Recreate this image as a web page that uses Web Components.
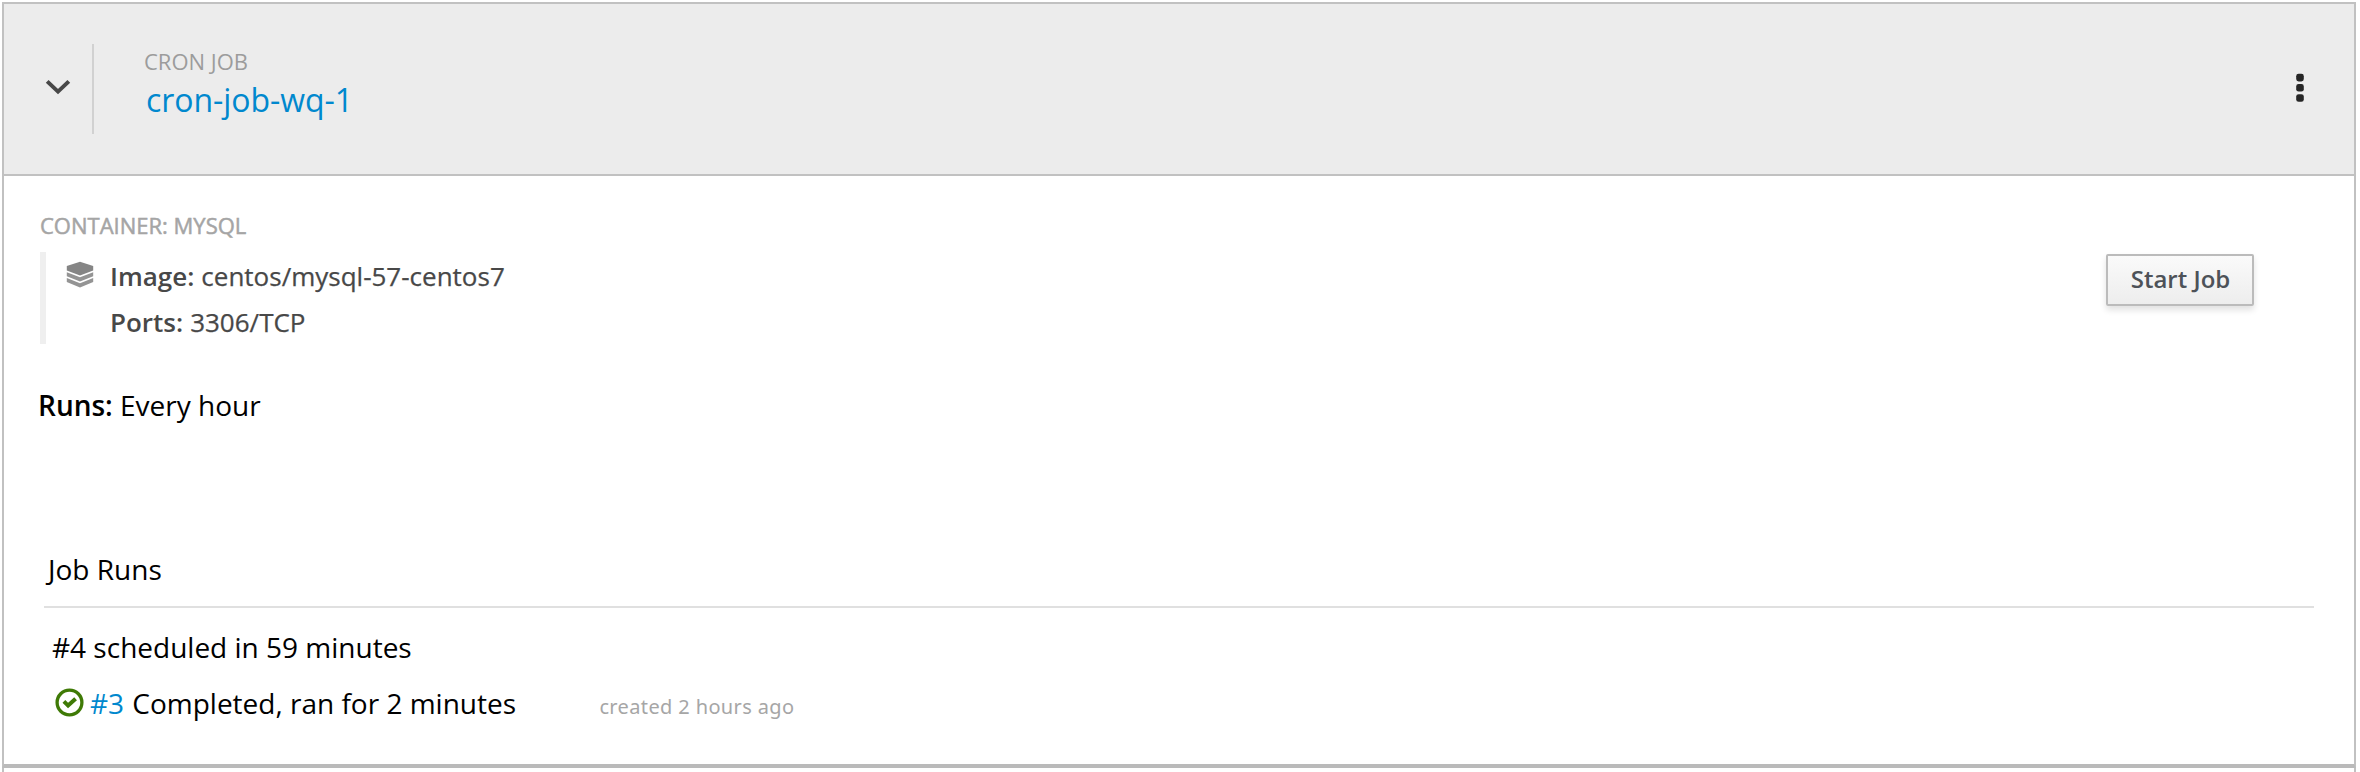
<!DOCTYPE html>
<html lang="en">
<head>
<meta charset="utf-8">
<title>cron-job-wq-1</title>
<style>
html, body { margin: 0; height: 100%; background: #fff; overflow: hidden; }
body { font-family: "Open Sans", "Noto Sans", sans-serif; color: #000; }
</style>
</head>
<body>
<overview-card>
  <card-header slot="header" kind="CRON JOB">cron-job-wq-1</card-header>
  <container-info name="CONTAINER: MYSQL">
    <info-row label="Image:" icon>centos/mysql-57-centos7</info-row>
    <info-row label="Ports:">3306/TCP</info-row>
  </container-info>
  <action-button slot="action">Start Job</action-button>
  <schedule-line label="Runs:" slot="details">Every hour</schedule-line>
  <job-runs heading="Job Runs" slot="details">
    <job-run>#4 scheduled in 59 minutes</job-run>
    <job-run number="#3" created="created 2 hours ago">Completed, ran for 2 minutes</job-run>
  </job-runs>
</overview-card>
<script>
function define(name, render) {
  customElements.define(name, class extends HTMLElement {
    constructor() {
      super();
      this.attachShadow({ mode: 'open' });
    }
    connectedCallback() {
      this.shadowRoot.innerHTML = render(this);
    }
  });
}

define('overview-card', () => `
<style>
:host { display: flex; flex-direction: column; box-sizing: border-box; height: 100vh; padding: 2px 4px 0 2px; }
.card { box-sizing: border-box; height: 766px; border: 2px solid #c1c1c1; border-bottom: 4px solid #bababa; }
.next { flex: 1; border: solid #c1c1c1; border-width: 0 2px; }
.top { display: flex; justify-content: space-between; align-items: flex-start; padding: 34px 100px 0 36px; }
.action { padding-top: 44px; }
</style>
<section class="card">
  <slot name="header"></slot>
  <div class="top"><slot></slot><div class="action"><slot name="action"></slot></div></div>
  <slot name="details"></slot>
</section>
<div class="next"></div>`);

define('card-header', el => `
<style>
:host { display: flex; box-sizing: border-box; height: 172px; padding: 40px 50px 0 40px; background: #ececec; border-bottom: 2px solid #c1c1c1; }
.chevron { display: block; width: 28px; height: 24px; margin: 32px 0 0 0; }
.rule { width: 2px; height: 90px; margin-left: 20px; background: #d1d1d1; }
.text { flex: 1; padding: 2px 0 0 50px; }
.kind { font-size: 22px; line-height: 30px; color: #9c9c9c; }
.name { font-size: 32px; line-height: 44px; color: #0088ce; margin: 2px 0 0 2px; letter-spacing: -.05px; }
.dots { display: block; width: 8px; height: 30px; margin-top: 29px; }
</style>
<svg class="chevron" viewBox="0 0 28 24"><path d="M3.2 5.4 14 15.6 24.8 5.4" fill="none" stroke="#484848" stroke-width="4"/></svg>
<div class="rule"></div>
<div class="text"><div class="kind">${el.getAttribute('kind')}</div><div class="name"><slot></slot></div></div>
<svg class="dots" viewBox="0 0 8 30" fill="#252525"><rect x=".2" y=".8" width="7.6" height="7.6" rx="2.4"/><rect x=".2" y="11" width="7.6" height="7.6" rx="2.4"/><rect x=".2" y="21.2" width="7.6" height="7.6" rx="2.4"/></svg>`);

define('container-info', el => `
<style>
:host { display: block; }
.name { font-size: 22px; line-height: 30px; color: #a5a5a5; -webkit-text-stroke: .5px #a5a5a5; }
.rows { box-sizing: border-box; height: 92px; margin-top: 12px; padding: 6px 0 0 20px; border-left: 6px solid #efefef; display: flex; flex-direction: column; gap: 10px; }
</style>
<div class="name">${el.getAttribute('name')}</div>
<div class="rows"><slot></slot></div>`);

define('info-row', el => `
<style>
:host { display: flex; height: 36px; font-size: 26px; line-height: 36px; color: #484848; }
.icon { width: 28px; margin-right: 16px; }
svg { display: block; width: 28px; height: 27px; margin-top: 3px; }
b { font-weight: 600; margin-right: 7px; }
span { -webkit-text-stroke: .25px #484848; }
</style>
<div class="icon">${el.hasAttribute('icon') ? `<svg viewBox="0 0 28 27"><path d="M.8 5 14 .8 27.2 5V9.6L14 14.4.8 9.6Z" fill="#858585"/><path d="M.8 11.2 14 16.2 27.2 11.2V15.2L14 20.4.8 15.2Z" fill="#949494"/><path d="M.8 17 14 22.2 27.2 17V21L14 26.4.8 21Z" fill="#949494"/></svg>` : ''}</div>
<b>${el.getAttribute('label')}</b><span><slot></slot></span>`);

define('action-button', () => `
<style>
:host { display: block; }
button { display: block; box-sizing: border-box; width: 148px; height: 52px; margin: 0; padding: 0 0 3px 1px; border: 2px solid #bbb; border-radius: 2px; background: linear-gradient(#fafafa, #ededed); box-shadow: 0 4px 6px rgba(3,3,3,.12); font: 600 24px/33px "Open Sans", sans-serif; color: #4d5258; white-space: nowrap; }
</style>
<button><slot></slot></button>`);

define('schedule-line', el => `
<style>
:host { display: block; margin: 42px 0 0 34px; font-size: 28px; line-height: 38px; }
b { font-weight: 600; }
</style>
<b>${el.getAttribute('label')}</b> <slot></slot>`);

define('job-runs', el => `
<style>
:host { display: block; margin: 126px 40px 0 40px; }
h2 { margin: 0; padding: 0 0 18px 4px; font-size: 28px; line-height: 38px; font-weight: 400; border-bottom: 2px solid #e0e0e0; }
.list { display: flex; flex-direction: column; gap: 18px; padding: 20px 0 0 8px; }
</style>
<h2>${el.getAttribute('heading')}</h2>
<div class="list"><slot></slot></div>`);

define('job-run', el => {
  const n = el.getAttribute('number'), c = el.getAttribute('created');
  return `
<style>
:host { display: flex; height: 38px; font-size: 28px; line-height: 38px; white-space: nowrap; }
svg { display: block; width: 29px; height: 29px; margin: 3.5px 6.5px 0 2.5px; }
a { color: #0088ce; margin-right: 8.2px; }
.created { font: 20px/27px "Noto Sans", sans-serif; letter-spacing: .37px; color: #a6a6a6; margin: 9px 0 0 83.3px; }
</style>
${n ? `<svg viewBox="0 0 29 29" fill="none" stroke="#3f7a06"><circle cx="14.5" cy="14.5" r="12.4" stroke-width="3.3"/><path d="M8.9 13.4 13.1 17.6 20.6 10.8" stroke-width="4"/></svg><a>${n}</a>` : ''}<span><slot></slot></span>${c ? `<span class="created">${c}</span>` : ''}`;
});
</script>
</body>
</html>
